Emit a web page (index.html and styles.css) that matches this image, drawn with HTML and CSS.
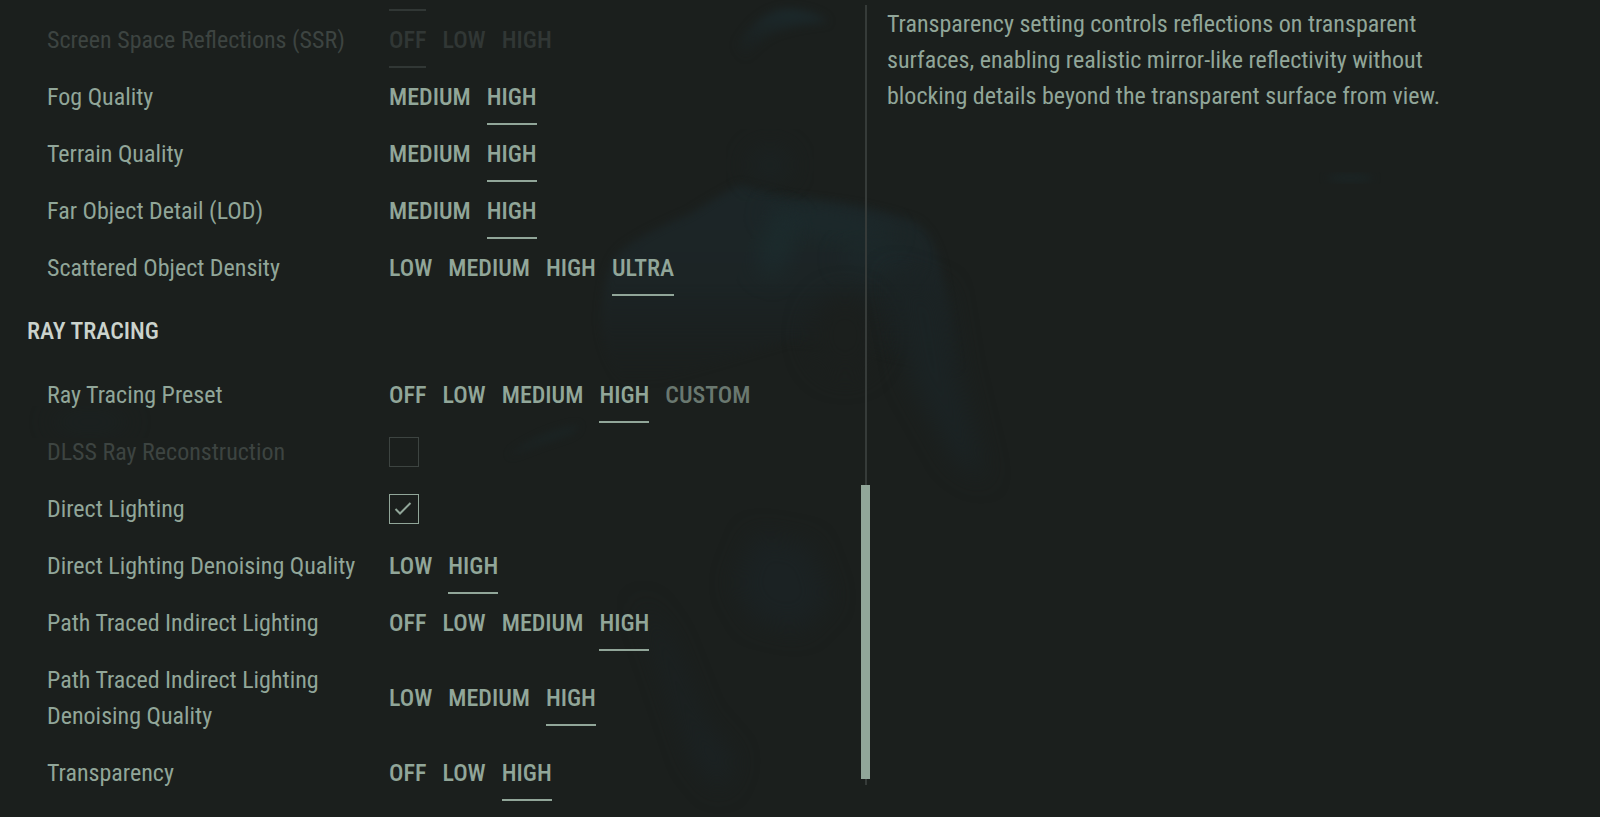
FILE: index.html
```
<!DOCTYPE html>
<html lang="en">
<head>
<meta charset="utf-8">
<title>Graphics settings</title>
<link rel="stylesheet" href="styles.css">
</head>
<body>
<svg class="backdrop" viewBox="0 0 1600 817" preserveAspectRatio="none" aria-hidden="true">
  <defs>
    <filter id="fine" color-interpolation-filters="sRGB" x="-30%" y="-50%" width="160%" height="200%"><feGaussianBlur stdDeviation="4"/></filter>
    <filter id="soft" color-interpolation-filters="sRGB" x="-50%" y="-50%" width="200%" height="200%"><feGaussianBlur stdDeviation="12"/></filter>
    <linearGradient id="crown" x1="0" y1="0" x2="0" y2="1">
      <stop offset="0" stop-color="#1c2a2d"/>
      <stop offset="1" stop-color="#1b2426" stop-opacity="0"/>
    </linearGradient>
    <linearGradient id="back" x1="0" y1="0" x2="0" y2="1">
      <stop offset="0" stop-color="#1c2628"/>
      <stop offset=".5" stop-color="#1c2425"/>
      <stop offset="1" stop-color="#1b2122" stop-opacity="0"/>
    </linearGradient>
  </defs>
  <path filter="url(#fine)" fill="url(#crown)" d="M737 45Q760 10 788 9Q815 10 828 22Q790 25 770 35Q755 45 745 60Z"/>
  <path filter="url(#fine)" fill="url(#back)" d="M740 185Q760 190 790 198Q870 205 915 222Q935 235 942 275L958 370L850 345L790 340L660 380L622 385Q598 345 602 310Q605 265 622 250Q640 235 690 214Q720 195 740 185Z"/>
  <ellipse filter="url(#soft)" fill="#1c2d2f" opacity=".6" cx="830" cy="224" rx="65" ry="14" transform="rotate(10 830 224)"/>
  <ellipse filter="url(#soft)" fill="#1c2f31" opacity=".7" cx="777" cy="245" rx="14" ry="34" transform="rotate(18 777 245)"/>
  <ellipse filter="url(#soft)" fill="#1c2b2d" opacity=".6" cx="875" cy="258" rx="35" ry="14"/>
  <ellipse filter="url(#soft)" fill="#1b1f1d" cx="845" cy="335" rx="36" ry="42"/>
  <path filter="url(#soft)" fill="#1b2324" d="M890 270L945 290L958 370L985 480L955 460L910 380Z"/>
  <ellipse filter="url(#soft)" fill="#1b2425" opacity=".6" cx="770" cy="165" rx="22" ry="18"/>
  <path filter="url(#fine)" fill="#1b292b" opacity=".6" d="M508 456Q540 432 580 425L572 433Q540 443 508 456Z"/>
  <path filter="url(#soft)" fill="#1b2223" d="M755 535L810 545L830 600L800 630L755 620L735 585Z"/>
  <path filter="url(#soft)" fill="#1b2223" d="M640 600L668 640L700 720L735 760L720 790L695 760Z"/>
  <ellipse filter="url(#fine)" fill="#1b292b" opacity=".8" cx="1350" cy="178" rx="24" ry="3"/>
  <ellipse filter="url(#soft)" fill="#1b2526" opacity=".6" cx="90" cy="422" rx="40" ry="8"/>
</svg>

<main class="screen">
  <form class="settings">
    <div class="row-edge"></div>

    <fieldset class="row faded" disabled aria-labelledby="ssr">
      <span class="label" id="ssr">Screen Space Reflections (SSR)</span>
      <div class="options">
        <label class="option"><input type="radio" name="ssr" checked>OFF</label>
        <label class="option"><input type="radio" name="ssr">LOW</label>
        <label class="option"><input type="radio" name="ssr">HIGH</label>
      </div>
    </fieldset>

    <fieldset class="row" aria-labelledby="fog">
      <span class="label" id="fog">Fog Quality</span>
      <div class="options">
        <label class="option"><input type="radio" name="fog">MEDIUM</label>
        <label class="option"><input type="radio" name="fog" checked>HIGH</label>
      </div>
    </fieldset>

    <fieldset class="row" aria-labelledby="terrain">
      <span class="label" id="terrain">Terrain Quality</span>
      <div class="options">
        <label class="option"><input type="radio" name="terrain">MEDIUM</label>
        <label class="option"><input type="radio" name="terrain" checked>HIGH</label>
      </div>
    </fieldset>

    <fieldset class="row" aria-labelledby="lod">
      <span class="label" id="lod">Far Object Detail (LOD)</span>
      <div class="options">
        <label class="option"><input type="radio" name="lod">MEDIUM</label>
        <label class="option"><input type="radio" name="lod" checked>HIGH</label>
      </div>
    </fieldset>

    <fieldset class="row" aria-labelledby="density">
      <span class="label" id="density">Scattered Object Density</span>
      <div class="options">
        <label class="option"><input type="radio" name="density">LOW</label>
        <label class="option"><input type="radio" name="density">MEDIUM</label>
        <label class="option"><input type="radio" name="density">HIGH</label>
        <label class="option"><input type="radio" name="density" checked>ULTRA</label>
      </div>
    </fieldset>

    <h2 class="heading">RAY TRACING</h2>

    <fieldset class="row" aria-labelledby="preset">
      <span class="label" id="preset">Ray Tracing Preset</span>
      <div class="options">
        <label class="option"><input type="radio" name="preset">OFF</label>
        <label class="option"><input type="radio" name="preset">LOW</label>
        <label class="option"><input type="radio" name="preset">MEDIUM</label>
        <label class="option"><input type="radio" name="preset" checked>HIGH</label>
        <label class="option dim"><input type="radio" name="preset" disabled>CUSTOM</label>
      </div>
    </fieldset>

    <div class="row disabled">
      <label class="label" for="dlss">DLSS Ray Reconstruction</label>
      <div class="tick"><input type="checkbox" id="dlss" disabled></div>
    </div>

    <div class="row">
      <label class="label" for="direct">Direct Lighting</label>
      <div class="tick">
        <input type="checkbox" id="direct" checked>
        <svg class="check" viewBox="0 0 30 30" aria-hidden="true"><path d="M6.500 15L11 19.500L21.500 9"/></svg>
      </div>
    </div>

    <fieldset class="row" aria-labelledby="dldq">
      <span class="label" id="dldq">Direct Lighting Denoising Quality</span>
      <div class="options">
        <label class="option"><input type="radio" name="dldq">LOW</label>
        <label class="option"><input type="radio" name="dldq" checked>HIGH</label>
      </div>
    </fieldset>

    <fieldset class="row" aria-labelledby="ptil">
      <span class="label" id="ptil">Path Traced Indirect Lighting</span>
      <div class="options">
        <label class="option"><input type="radio" name="ptil">OFF</label>
        <label class="option"><input type="radio" name="ptil">LOW</label>
        <label class="option"><input type="radio" name="ptil">MEDIUM</label>
        <label class="option"><input type="radio" name="ptil" checked>HIGH</label>
      </div>
    </fieldset>

    <fieldset class="row" aria-labelledby="ptdq">
      <span class="label" id="ptdq">Path Traced Indirect Lighting<br>Denoising Quality</span>
      <div class="options">
        <label class="option"><input type="radio" name="ptdq">LOW</label>
        <label class="option"><input type="radio" name="ptdq">MEDIUM</label>
        <label class="option"><input type="radio" name="ptdq" checked>HIGH</label>
      </div>
    </fieldset>

    <fieldset class="row" aria-labelledby="transparency">
      <span class="label" id="transparency">Transparency</span>
      <div class="options">
        <label class="option"><input type="radio" name="transparency">OFF</label>
        <label class="option"><input type="radio" name="transparency">LOW</label>
        <label class="option"><input type="radio" name="transparency" checked>HIGH</label>
      </div>
    </fieldset>
  </form>

  <div class="scroll"><div class="track"><div class="thumb"></div></div></div>

  <aside class="description">
    <p>Transparency setting controls reflections on transparent surfaces, enabling realistic mirror-like reflectivity without blocking details beyond the transparent surface from view.</p>
  </aside>
</main>
</body>
</html>
```
FILE: styles.css
```
:root {
  --bg: #1b1f1d;
  --text: #91a699;
  --bright: #cbd3cd;
  --muted: #6a7870;
  --off: #3d4441;
  --faint: #313735;
}

* { box-sizing: border-box; }

body {
  margin: 0;
  background: var(--bg);
  color: var(--text);
  font: 400 24px/36px "Roboto Condensed", "Liberation Sans Narrow", sans-serif;
}

.backdrop {
  position: absolute;
  inset: 0;
  width: 100%;
  height: 100%;
  z-index: -1;
}

.screen {
  display: grid;
  grid-template-columns: 861fr 10px 729fr;
  min-height: 100vh;
}

.settings {
  display: flex;
  flex-direction: column;
  padding-bottom: 16px;
}

.row,
.row-edge {
  display: grid;
  grid-template-columns: 342px 1fr;
  align-items: center;
  margin: 0 0 0 47px;
  border: 0;
  padding: 11px 0 10px;
}

.row-edge {
  height: 11px;
  padding: 9px 0 0;
}

.row-edge::after {
  content: "";
  grid-column: 2;
  width: 37px;
  height: 2px;
  background: var(--faint);
}

.options {
  display: flex;
  gap: 16px;
}

.option {
  position: relative;
  cursor: pointer;
  font-weight: 500;
}

.option input {
  position: absolute;
  inset: 0;
  margin: 0;
  appearance: none;
}

.option:has(input:checked)::after {
  content: "";
  position: absolute;
  left: 0;
  right: 0;
  bottom: -10px;
  height: 2px;
  background: currentColor;
}

.option.dim { color: var(--muted); }

.faded .label,
.disabled .label { color: var(--off); }

.faded .option { color: var(--faint); }

.tick {
  display: grid;
  width: 30px;
  height: 30px;
}

.tick > * { grid-area: 1 / 1; }

.tick input {
  appearance: none;
  width: 30px;
  height: 30px;
  margin: 0;
  border: 1px solid var(--text);
}

.disabled .tick input { border-color: var(--off); }

.check {
  width: 30px;
  height: 30px;
  fill: none;
  stroke: var(--text);
  stroke-width: 2;
  pointer-events: none;
}

.heading {
  margin: 0 0 0 27px;
  padding: 17px 0;
  color: var(--bright);
  font-size: 24px;
  line-height: 36px;
  font-weight: 500;
}

.scroll {
  display: flex;
  justify-content: center;
  padding: 5px 0 32px;
}

.track {
  position: relative;
  width: 2px;
  background: #363b39;
}

.thumb {
  position: absolute;
  top: 61.5%;
  left: -4px;
  width: 9px;
  height: 37.7%;
  background: var(--text);
}

.description { padding: 6px 0 0 16px; }

.description p {
  max-width: 560px;
  margin: 0;
}
```
